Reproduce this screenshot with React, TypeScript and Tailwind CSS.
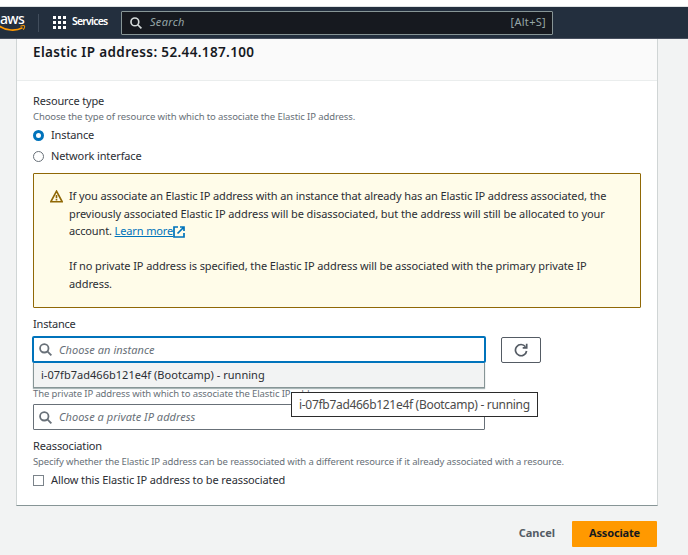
import React from "react";

function SearchIcon({ className, weight = 2 }: { className: string; weight?: number }) {
  return (
    <svg viewBox="0 0 16 16" className={className} fill="none" stroke="currentColor" strokeWidth={weight}>
      <circle cx="6.500" cy="6.500" r="5.200" />
      <path d="M10.300 10.300l4.900 4.900" />
    </svg>
  );
}

function AwsLogo() {
  return (
    <div className="flex h-[19px] w-[26px] flex-col">
      <span className="h-[12px] text-[14px] leading-[11px] font-medium tracking-[-0.7px] text-white">aws</span>
      <svg viewBox="0 0 26 7" className="h-[7px] w-[26px]" fill="none" stroke="#ff9900">
        <path d="M-1 .8C6 6 16 6.200 22.500 2.800" strokeWidth="1.700" />
        <path d="M20.400 1.200C22 .7 24.200 .5 24.500 1s-.2 2.500-1.300 3.600" strokeWidth="1.100" />
      </svg>
    </div>
  );
}

function TopBar() {
  return (
    <header className="flex h-[32px] items-center border-b border-[#474f5e] bg-[#232f3e]">
      <AwsLogo />
      <div className="ml-[12px] h-[18px] w-px bg-[#414d5c]" />
      <div className="ml-[14px] grid grid-cols-3 gap-[2px]">
        {Array.from({ length: 9 }, (_, i) => (
          <span key={i} className="size-[3px] bg-white" />
        ))}
      </div>
      <span className="ml-[6px] w-[49px] pb-[2px] text-[10.5px] font-semibold tracking-[-0.8px] text-white">Services</span>
      <div className="flex h-[24px] w-[432px] items-center rounded-[1px] border border-[#879596] bg-[#16191f] text-[#95a5a6]">
        <SearchIcon className="ml-[8px] size-[12px] text-[#d5dbdb]" weight={2.2} />
        <span className="ml-[8px] flex-1 text-[11px] tracking-[0.3px] italic">Search</span>
        <span className="mr-[6px] text-[11px] tracking-[0.3px]">[Alt+S]</span>
      </div>
    </header>
  );
}

function Radio({ label, checked = false }: { label: string; checked?: boolean }) {
  return (
    <div className="flex h-[21px] items-center">
      <span
        className={
          checked
            ? "size-[11px] rounded-full border-[3.5px] border-[#0073bb] bg-white"
            : "size-[11px] rounded-full border border-[#687078] bg-white"
        }
      />
      <span className="ml-[7px] text-[11px] tracking-[-0.14px]">{label}</span>
    </div>
  );
}

function Alert() {
  return (
    <div className="flex h-[135px] w-[608px] rounded-[1px] border border-[#906806] bg-[#fffce9] pt-[13px] pl-[16px]">
      <svg viewBox="0 0 16 16" className="mt-[3px] size-[13px] shrink-0" fill="none" stroke="#906806" strokeWidth="2">
        <path d="M8 1.500L15 14.500H1z" />
        <path d="M8 6v4M8 11v2" />
      </svg>
      <div className="ml-[6px] text-[11px] leading-[17.5px] whitespace-nowrap">
        <p className="tracking-[-0.11px]">If you associate an Elastic IP address with an instance that already has an Elastic IP address associated, the</p>
        <p className="tracking-[-0.07px]">previously associated Elastic IP address will be disassociated, but the address will still be allocated to your</p>
        <p className="flex items-center tracking-[-0.13px]">
          <span>account.&nbsp;</span>
          <a className="flex items-center text-[#0073bb]">
            <span className="underline">Learn more</span>
            <svg viewBox="0 0 12 12" className="mt-[2px] size-[12px]" fill="none" stroke="#0073bb" strokeWidth="1.700">
              <path d="M5 1H1v10h10V7" />
              <path d="M7 1h4v4M11 1L4.500 7.500" />
            </svg>
          </a>
        </p>
        <p className="mt-[17px] tracking-[-0.1px]">If no private IP address is specified, the Elastic IP address will be associated with the primary private IP</p>
        <p className="pt-px tracking-[-0.1px]">address.</p>
      </div>
    </div>
  );
}

export default function App() {
  return (
    <div className="h-[555px] w-[688px] overflow-hidden bg-[#f2f3f3] font-['Noto_Sans',sans-serif] text-[#2b2e34]">
      <div className="h-[7px] border-b border-[#dfe3e4] bg-white" />
      <TopBar />
      <main className="flex flex-col">
        <section className="ml-[16px] flex h-[467px] w-[642px] flex-col border-x border-b border-x-[#d0d5d5] border-b-[#879596] bg-white">
          <div className="h-[42px] border-b border-[#eaeded] bg-[#fafafa] pl-[16px]">
            <h2 className="pt-[3px] text-[13.5px] leading-[20px] font-semibold tracking-[0.36px] text-[#16191f]">Elastic IP address: 52.44.187.100</h2>
          </div>
          <div className="flex flex-col pl-[16px] whitespace-nowrap">
            <div className="mt-[11px] h-[18px] text-[11px] leading-[17px] tracking-[-0.14px]">Resource type</div>
            <div className="h-[15px] text-[9.5px] leading-[14px] tracking-[-0.11px] text-[#687078]">
              Choose the type of resource with which to associate the Elastic IP address.
            </div>
            <Radio label="Instance" checked />
            <Radio label="Network interface" />
            <div className="mt-[6px]">
              <Alert />
            </div>
            <div className="mt-[7px] h-[18px] text-[11px] leading-[17px] tracking-[-0.2px]">Instance</div>
            <div className="mt-[3px] ml-[-1px] flex items-center">
              <div className="flex h-[27px] w-[454px] items-center rounded-[2px] border-2 border-[#0073bb] bg-white text-[#687078]">
                <SearchIcon className="ml-[5px] size-[13px]" weight={2.2} />
                <span className="mt-[2px] ml-[7px] text-[11px] tracking-[0.06px] italic">Choose an instance</span>
              </div>
              <button className="ml-[15px] flex h-[26px] w-[40px] items-center justify-center rounded-[2px] border border-[#545b64]">
                <svg viewBox="0 0 14 14" className="size-[14px]" fill="none" stroke="#545b64" strokeWidth="1.700">
                  <path d="M12.600 8A5.600 5.600 0 1 1 11.500 3.700" />
                  <path d="M12.700 .8V4.800H8.700" />
                </svg>
              </button>
            </div>
            <div className="flex h-[25px] w-[452px] items-center border border-t-0 border-[#879596] bg-[#f2f3f3] pl-[7px] text-[11px] tracking-[0.03px] shadow-[0_1px_1px_#aab7b8]">
              i-07fb7ad466b121e4f (Bootcamp) - running
            </div>
            <div className="relative h-[16px] text-[9.5px] leading-[12px] tracking-[-0.11px] text-[#687078]">
              The private IP address with which to associate the Elastic IP address.
              <div className="absolute top-[4px] left-[258px] flex h-[25px] w-[247px] items-center border border-[#2b2b2b] bg-white pl-[7px] text-[12px] tracking-[-0.3px] text-[#4b4b4b]">
                i-07fb7ad466b121e4f (Bootcamp) - running
              </div>
            </div>
            <div className="flex h-[26px] w-[452px] items-center rounded-[1px] border border-[#687078] bg-white text-[#687078]">
              <SearchIcon className="ml-[5px] size-[13px]" weight={2.2} />
              <span className="ml-[7px] text-[11px] tracking-[0.04px] italic">Choose a private IP address</span>
            </div>
            <div className="mt-[7px] h-[18px] text-[11px] leading-[17px] tracking-[-0.15px]">Reassociation</div>
            <div className="h-[14px] text-[9.5px] leading-[13px] tracking-[-0.115px] text-[#687078]">
              Specify whether the Elastic IP address can be reassociated with a different resource if it already associated with a resource.
            </div>
            <div className="mt-[1px] flex h-[20px] items-center">
              <span className="size-[11px] border border-[#7b838a]" />
              <span className="ml-[7px] text-[11px] tracking-[-0.1px]">Allow this Elastic IP address to be reassociated</span>
            </div>
          </div>
        </section>
        <footer className="mt-[15px] flex h-[26px] w-[657px] items-center justify-end text-[11px] font-bold">
          <button className="mr-[17px] pb-[2px] text-[#545b64]">Cancel</button>
          <button className="h-[26px] w-[85px] rounded-[1px] bg-[#ff9900] pb-[2px] tracking-[-0.15px] text-[#16191f]">Associate</button>
        </footer>
      </main>
    </div>
  );
}
